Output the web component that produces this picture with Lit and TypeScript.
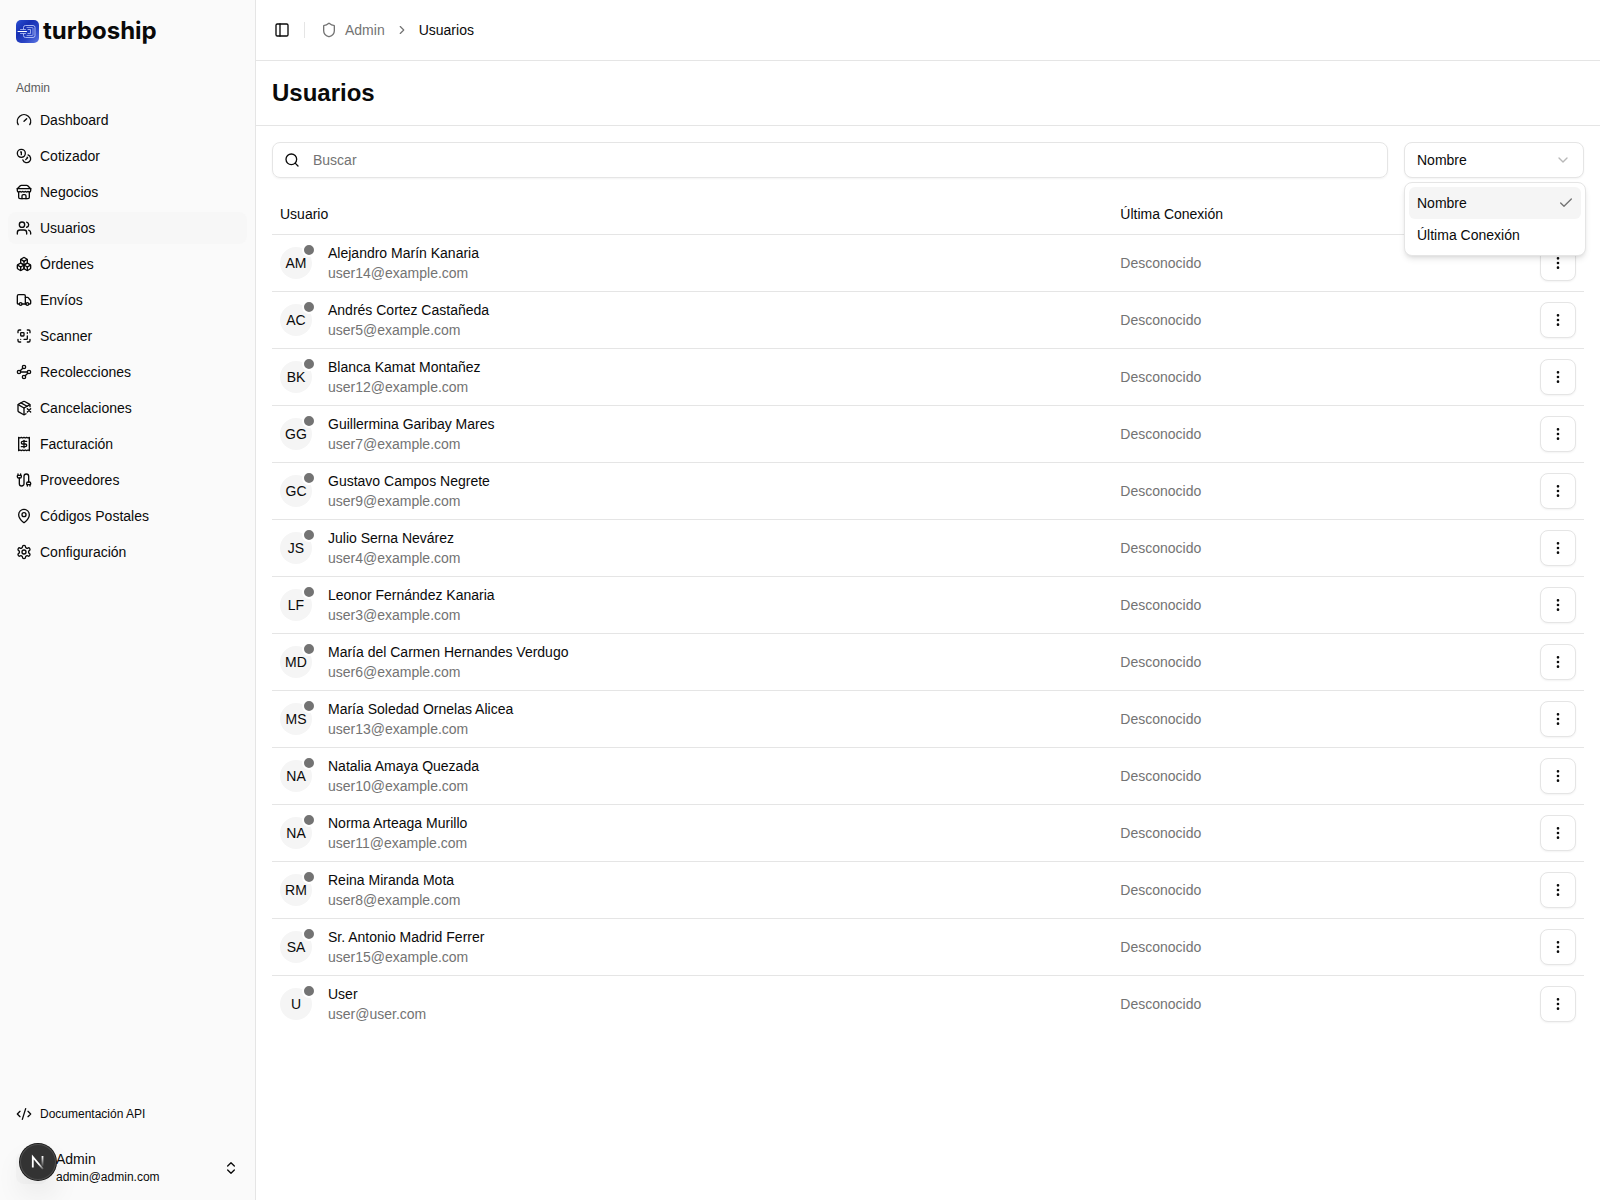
import { LitElement, html, css, svg, nothing, type SVGTemplateResult } from "lit";
import { customElement, property, state } from "lit/decorators.js";
import { classMap } from "lit/directives/class-map.js";

const icons: Record<string, SVGTemplateResult> = {
  gauge: svg`<path d="m12 14 4-4"/><path d="M3.34 19a10 10 0 1 1 17.32 0"/>`,
  coins: svg`<circle cx="8" cy="8" r="6"/><path d="M18.09 10.37A6 6 0 1 1 10.34 18"/><path d="M7 6h1v4"/><path d="m16.71 13.88.7.71-2.82 2.82"/>`,
  store: svg`<path d="m2 7 4.41-4.41A2 2 0 0 1 7.83 2h8.34a2 2 0 0 1 1.42.59L22 7"/><path d="M4 12v8a2 2 0 0 0 2 2h12a2 2 0 0 0 2-2v-8"/><path d="M15 22v-4a2 2 0 0 0-2-2h-2a2 2 0 0 0-2 2v4"/><path d="M2 7h20"/><path d="M22 7v3a2 2 0 0 1-2 2a2.7 2.7 0 0 1-1.59-.63.7.7 0 0 0-.82 0A2.7 2.7 0 0 1 16 12a2.7 2.7 0 0 1-1.59-.63.7.7 0 0 0-.82 0A2.7 2.7 0 0 1 12 12a2.7 2.7 0 0 1-1.59-.63.7.7 0 0 0-.82 0A2.7 2.7 0 0 1 8 12a2.7 2.7 0 0 1-1.59-.63.7.7 0 0 0-.82 0A2.7 2.7 0 0 1 4 12a2 2 0 0 1-2-2V7"/>`,
  users: svg`<path d="M16 21v-2a4 4 0 0 0-4-4H6a4 4 0 0 0-4 4v2"/><circle cx="9" cy="7" r="4"/><path d="M22 21v-2a4 4 0 0 0-3-3.87"/><path d="M16 3.13a4 4 0 0 1 0 7.75"/>`,
  boxes: svg`<path d="M2.97 12.92A2 2 0 0 0 2 14.63v3.24a2 2 0 0 0 .97 1.71l3 1.8a2 2 0 0 0 2.06 0L12 19v-5.5l-5-3-4.03 2.42Z"/><path d="m7 16.5-4.74-2.85"/><path d="m7 16.5 5-3"/><path d="M7 16.5v5.17"/><path d="M12 13.5V19l3.97 2.38a2 2 0 0 0 2.06 0l3-1.8a2 2 0 0 0 .97-1.71v-3.24a2 2 0 0 0-.97-1.71L17 10.5l-5 3Z"/><path d="m17 16.5-5-3"/><path d="m17 16.5 4.74-2.85"/><path d="M17 16.5v5.17"/><path d="M7.97 4.42A2 2 0 0 0 7 6.13v4.37l5 3 5-3V6.13a2 2 0 0 0-.97-1.71l-3-1.8a2 2 0 0 0-2.06 0l-3 1.8Z"/><path d="M12 8 7.26 5.15"/><path d="m12 8 4.74-2.85"/><path d="M12 13.5V8"/>`,
  truck: svg`<path d="M14 18V6a2 2 0 0 0-2-2H4a2 2 0 0 0-2 2v11a1 1 0 0 0 1 1h2"/><path d="M15 18H9"/><path d="M19 18h2a1 1 0 0 0 1-1v-3.65a1 1 0 0 0-.22-.624l-3.48-4.35A1 1 0 0 0 17.52 8H14"/><circle cx="17" cy="18" r="2"/><circle cx="7" cy="18" r="2"/>`,
  scan: svg`<path d="M17 12v4a1 1 0 0 1-1 1h-4"/><path d="M17 3h2a2 2 0 0 1 2 2v2"/><path d="M17 8V7"/><path d="M21 17v2a2 2 0 0 1-2 2h-2"/><path d="M3 7V5a2 2 0 0 1 2-2h2"/><path d="M7 17h.01"/><path d="M7 21H5a2 2 0 0 1-2-2v-2"/><rect x="7" y="7" width="5" height="5" rx="1"/>`,
  waypoints: svg`<circle cx="12" cy="4.5" r="2.5"/><path d="m10.2 6.3-3.9 3.9"/><circle cx="4.5" cy="12" r="2.5"/><path d="M7 12h10"/><circle cx="19.5" cy="12" r="2.5"/><path d="m13.8 17.7 3.9-3.9"/><circle cx="12" cy="19.5" r="2.5"/>`,
  packageX: svg`<path d="M21 10V8a2 2 0 0 0-1-1.73l-7-4a2 2 0 0 0-2 0l-7 4A2 2 0 0 0 3 8v8a2 2 0 0 0 1 1.73l7 4a2 2 0 0 0 2 0l2-1.14"/><path d="m7.5 4.27 9 5.15"/><path d="M3.29 7 12 12l8.71-5"/><path d="M12 22V12"/><path d="m17 13 5 5m-5 0 5-5"/>`,
  receipt: svg`<path d="M4 2v20l2-1 2 1 2-1 2 1 2-1 2 1 2-1 2 1V2l-2 1-2-1-2 1-2-1-2 1-2-1-2 1Z"/><path d="M16 8h-6a2 2 0 1 0 0 4h4a2 2 0 1 1 0 4H8"/><path d="M12 17.5v-11"/>`,
  cable: svg`<path d="M17 21v-2a1 1 0 0 1-1-1v-1a2 2 0 0 1 2-2h2a2 2 0 0 1 2 2v1a1 1 0 0 1-1 1"/><path d="M19 15V6.5a1 1 0 0 0-7 0v11a1 1 0 0 1-7 0V9"/><path d="M21 21v-2h-4"/><path d="M3 5h4V3"/><path d="M7 5a1 1 0 0 1 1 1v1a2 2 0 0 1-2 2H4a2 2 0 0 1-2-2V6a1 1 0 0 1 1-1V3"/>`,
  pin: svg`<path d="M20 10c0 4.993-5.539 10.193-7.399 11.799a1 1 0 0 1-1.202 0C9.539 20.193 4 14.993 4 10a8 8 0 0 1 16 0"/><circle cx="12" cy="10" r="3"/>`,
  settings: svg`<path d="M12.22 2h-.44a2 2 0 0 0-2 2v.18a2 2 0 0 1-1 1.73l-.43.25a2 2 0 0 1-2 0l-.15-.08a2 2 0 0 0-2.73.73l-.22.38a2 2 0 0 0 .73 2.73l.15.1a2 2 0 0 1 1 1.72v.51a2 2 0 0 1-1 1.74l-.15.09a2 2 0 0 0-.73 2.73l.22.38a2 2 0 0 0 2.73.73l.15-.08a2 2 0 0 1 2 0l.43.25a2 2 0 0 1 1 1.73V20a2 2 0 0 0 2 2h.44a2 2 0 0 0 2-2v-.18a2 2 0 0 1 1-1.73l.43-.25a2 2 0 0 1 2 0l.15.08a2 2 0 0 0 2.73-.73l.22-.39a2 2 0 0 0-.73-2.73l-.15-.08a2 2 0 0 1-1-1.74v-.5a2 2 0 0 1 1-1.74l.15-.09a2 2 0 0 0 .73-2.73l-.22-.38a2 2 0 0 0-2.73-.73l-.15.08a2 2 0 0 1-2 0l-.43-.25a2 2 0 0 1-1-1.73V4a2 2 0 0 0-2-2z"/><circle cx="12" cy="12" r="3"/>`,
  code: svg`<path d="m18 16 4-4-4-4"/><path d="m6 8-4 4 4 4"/><path d="m14.5 4-5 16"/>`,
  chevronsUpDown: svg`<path d="m7 15 5 5 5-5"/><path d="m7 9 5-5 5 5"/>`,
  panelLeft: svg`<rect width="18" height="18" x="3" y="3" rx="2"/><path d="M9 3v18"/>`,
  shield: svg`<path d="M20 13c0 5-3.5 7.5-7.66 8.95a1 1 0 0 1-.67-.01C7.5 20.5 4 18 4 13V6a1 1 0 0 1 1-1c2 0 4.5-1.2 6.24-2.72a1.17 1.17 0 0 1 1.52 0C14.51 3.81 17 5 19 5a1 1 0 0 1 1 1z"/>`,
  chevronRight: svg`<path d="m9 18 6-6-6-6"/>`,
  chevronDown: svg`<path d="m6 9 6 6 6-6"/>`,
  check: svg`<path d="M20 6 9 17l-5-5"/>`,
  search: svg`<circle cx="11" cy="11" r="8"/><path d="m21 21-4.3-4.3"/>`,
  dots: svg`<circle cx="12" cy="12" r="1"/><circle cx="12" cy="5" r="1"/><circle cx="12" cy="19" r="1"/>`,
};

const icon = (name: string, size = 16) => html`<svg
  width=${size} height=${size} viewBox="0 0 24 24" fill="none" stroke="currentColor"
  stroke-width="2" stroke-linecap="round" stroke-linejoin="round" aria-hidden="true"
>${icons[name]}</svg>`;

const reset = css`
  *, *::before, *::after { box-sizing: border-box; }
  button, input, select { font: inherit; color: inherit; }
  button { cursor: pointer; }
  svg { display: block; flex: none; }
  a { color: inherit; text-decoration: none; }
`;

const navItems = [
  ["Dashboard", "gauge"],
  ["Cotizador", "coins"],
  ["Negocios", "store"],
  ["Usuarios", "users"],
  ["Órdenes", "boxes"],
  ["Envíos", "truck"],
  ["Scanner", "scan"],
  ["Recolecciones", "waypoints"],
  ["Cancelaciones", "packageX"],
  ["Facturación", "receipt"],
  ["Proveedores", "cable"],
  ["Códigos Postales", "pin"],
  ["Configuración", "settings"],
];

interface User {
  name: string;
  email: string;
  initials: string;
}

const user = (initials: string, name: string, email: string): User => ({ initials, name, email });

const users: User[] = [
  user("AM", "Alejandro Marín Kanaria", "user14@example.com"),
  user("AC", "Andrés Cortez Castañeda", "user5@example.com"),
  user("BK", "Blanca Kamat Montañez", "user12@example.com"),
  user("GG", "Guillermina Garibay Mares", "user7@example.com"),
  user("GC", "Gustavo Campos Negrete", "user9@example.com"),
  user("JS", "Julio Serna Nevárez", "user4@example.com"),
  user("LF", "Leonor Fernández Kanaria", "user3@example.com"),
  user("MD", "María del Carmen Hernandes Verdugo", "user6@example.com"),
  user("MS", "María Soledad Ornelas Alicea", "user13@example.com"),
  user("NA", "Natalia Amaya Quezada", "user10@example.com"),
  user("NA", "Norma Arteaga Murillo", "user11@example.com"),
  user("RM", "Reina Miranda Mota", "user8@example.com"),
  user("SA", "Sr. Antonio Madrid Ferrer", "user15@example.com"),
  user("U", "User", "user@user.com"),
];

@customElement("app-sidebar")
export class AppSidebar extends LitElement {
  @property() current = "Usuarios";

  static styles = [
    reset,
    css`
      :host {
        display: flex;
        flex-direction: column;
        position: sticky;
        top: 0;
        height: 100vh;
        background: #fafafa;
        border-right: 1px solid #e5e5e5;
      }
      .brand {
        display: flex;
        align-items: center;
        gap: 4px;
        height: 64px;
        padding: 0 16px 2px;
        font-family: Inter, "Liberation Sans", sans-serif;
        font-size: 24px;
        line-height: 32px;
        font-weight: 700;
      }
      .nav { flex: 1; padding: 8px; overflow: auto; }
      .label {
        margin: 0;
        padding: 0 8px;
        font-size: 12px;
        line-height: 32px;
        font-weight: 400;
        color: #5c5c5c;
      }
      .list { display: grid; gap: 4px; margin: 0; padding: 0; list-style: none; }
      .item {
        display: flex;
        align-items: center;
        gap: 8px;
        height: 32px;
        padding: 0 8px;
        border-radius: 8px;
      }
      .item.active, .item:hover { background: #f7f7f7; }
      .item.small { height: 28px; font-size: 12px; }
      .support { padding: 8px; }
      .footer { padding: 8px; }
      .account {
        display: flex;
        align-items: center;
        gap: 8px;
        width: 100%;
        height: 48px;
        padding: 0 8px;
        border: 0;
        border-radius: 8px;
        background: none;
        text-align: left;
      }
      .avatar { width: 32px; height: 32px; border-radius: 8px; background: #f5f5f5; }
      .who { display: grid; flex: 1; line-height: 18px; }
      .mail { font-size: 12px; }
    `,
  ];

  render() {
    return html`
      <a class="brand" href="#inicio">
        <svg width="23" height="24" viewBox="0 -1 23 24" fill="none" aria-hidden="true">
          <defs>
            <linearGradient id="brand-fill" x1="0" y1="0" x2="1" y2="1">
              <stop offset="0" stop-color="#2b50d2" />
              <stop offset="0.35" stop-color="#1730b4" />
              <stop offset="0.65" stop-color="#2a44c4" />
              <stop offset="1" stop-color="#6079e4" />
            </linearGradient>
          </defs>
          <rect width="23" height="23" rx="5" fill="url(#brand-fill)" />
          <g stroke="#b9c5f8" stroke-linecap="round" stroke-linejoin="round">
            <path d="M2 11.5h8.500" stroke="#fff" />
            <path d="M4.500 9.500h5M4.500 13.500h5" stroke-width=".8" />
            <path d="M7.500 9V7.500q0-2 2-2H17q2 0 2 2v8q0 2-2 2H9.500q-2 0-2-2V14" stroke-width=".9" />
            <path d="M11 7.500h5q1 0 1 1v6q0 1-1 1h-5" stroke-width=".7" />
            <path d="M12 9.500h2.500v4H12" stroke-width=".8" />
          </g>
        </svg>
        <span>turboship</span>
      </a>
      <nav class="nav" aria-label="Admin">
        <h2 class="label">Admin</h2>
        <ul class="list">
          ${navItems.map(
            ([label, glyph]) => html`<li>
              <a
                class=${classMap({ item: true, active: label === this.current })}
                href="#${glyph}"
                aria-current=${label === this.current ? "page" : nothing}
                >${icon(glyph)}<span>${label}</span></a
              >
            </li>`
          )}
        </ul>
      </nav>
      <div class="support">
        <a class="item small" href="#api">${icon("code")}<span>Documentación API</span></a>
      </div>
      <div class="footer">
        <button class="account" type="button">
          <span class="avatar"></span>
          <span class="who">
            <span>Admin</span>
            <span class="mail">admin@admin.com</span>
          </span>
          ${icon("chevronsUpDown")}
        </button>
      </div>
    `;
  }
}

@customElement("sort-select")
export class SortSelect extends LitElement {
  @state() private value = "Nombre";
  @state() private open = true;

  private options = ["Nombre", "Última Conexión"];

  static styles = [
    reset,
    css`
      :host { display: block; position: relative; }
      .trigger { display: grid; grid-template-columns: 1fr 42px; align-items: center; }
      .field {
        grid-area: 1 / 1 / 2 / 3;
        appearance: none;
        width: 100%;
        height: 36px;
        padding: 0 12px;
        border: 1px solid #e5e5e5;
        border-radius: 8px;
        background: #fff;
        box-shadow: 0 1px 2px rgb(0 0 0 / 0.05);
      }
      .chevron { grid-area: 1 / 2; justify-self: center; color: #737373; opacity: 0.5; pointer-events: none; }
      .menu {
        position: absolute;
        z-index: 2;
        top: calc(100% + 4px);
        left: 0;
        right: -2px;
        padding: 4px;
        border: 1px solid #e5e5e5;
        border-radius: 8px;
        background: #fff;
        box-shadow: 0 4px 6px -1px rgb(0 0 0 / 0.1), 0 2px 4px -2px rgb(0 0 0 / 0.1);
      }
      .option {
        display: flex;
        align-items: center;
        justify-content: space-between;
        width: 100%;
        height: 32px;
        padding: 0 7px 0 8px;
        border: 0;
        border-radius: 6px;
        background: none;
        text-align: left;
      }
      .option.selected { background: #f5f5f5; }
      .option svg { color: #737373; }
    `,
  ];

  private pick(value: string) {
    this.value = value;
    this.open = false;
  }

  render() {
    return html`
      <div class="trigger">
        <select
          class="field"
          aria-label="Ordenar por"
          .value=${this.value}
          @change=${(e: Event) => this.pick((e.target as HTMLSelectElement).value)}
        >
          ${this.options.map((o) => html`<option value=${o}>${o}</option>`)}
        </select>
        <span class="chevron">${icon("chevronDown")}</span>
      </div>
      ${this.open
        ? html`<div class="menu" role="listbox" aria-label="Ordenar por">
            ${this.options.map(
              (o) => html`<button
                type="button"
                role="option"
                aria-selected=${o === this.value ? "true" : "false"}
                class=${classMap({ option: true, selected: o === this.value })}
                @click=${() => this.pick(o)}
              >
                <span>${o}</span>${o === this.value ? icon("check") : nothing}
              </button>`
            )}
          </div>`
        : nothing}
    `;
  }
}

@customElement("user-table")
export class UserTable extends LitElement {
  @property({ attribute: false }) users: User[] = [];

  static styles = [
    reset,
    css`
      :host { display: block; }
      .table { width: 100%; border-spacing: 0; table-layout: fixed; }
      .col-user { width: 64.05%; }
      .col-menu { width: 52px; }
      th {
        height: 41px;
        padding: 0 8px;
        border-bottom: 1px solid #e5e5e5;
        font-weight: 400;
        text-align: left;
      }
      td { padding: 8px; border-bottom: 1px solid #e5e5e5; }
      tbody tr:last-child td { border-bottom: 0; }
      .person { display: flex; align-items: center; gap: 16px; }
      .avatar {
        display: grid;
        place-items: center;
        position: relative;
        width: 32px;
        height: 32px;
        border-radius: 50%;
        background: #f5f5f5;
      }
      .status {
        position: absolute;
        top: -4px;
        right: -4px;
        width: 14px;
        height: 14px;
        border: 2px solid #fff;
        border-radius: 50%;
        background: #737373;
      }
      .who { display: grid; }
      .muted { color: #737373; }
      .more {
        display: grid;
        place-items: center;
        width: 36px;
        height: 36px;
        padding: 0;
        border: 1px solid #e5e5e5;
        border-radius: 8px;
        background: #fff;
        box-shadow: 0 1px 2px rgb(0 0 0 / 0.05);
      }
    `,
  ];

  render() {
    return html`<table class="table">
      <colgroup>
        <col class="col-user" />
        <col />
        <col class="col-menu" />
      </colgroup>
      <thead>
        <tr>
          <th scope="col">Usuario</th>
          <th scope="col">Última Conexión</th>
          <th></th>
        </tr>
      </thead>
      <tbody>
        ${this.users.map(
          (u) => html`<tr>
            <td>
              <div class="person">
                <span class="avatar">${u.initials}<span class="status"></span></span>
                <span class="who"><span>${u.name}</span><span class="muted">${u.email}</span></span>
              </div>
            </td>
            <td class="muted">Desconocido</td>
            <td>
              <button class="more" type="button" aria-label="Acciones">${icon("dots")}</button>
            </td>
          </tr>`
        )}
      </tbody>
    </table>`;
  }
}

@customElement("app-root")
export class AppRoot extends LitElement {
  @state() private query = "";

  static styles = [
    reset,
    css`
      :host {
        display: grid;
        grid-template-columns: 256px minmax(0, 1fr);
        min-height: 100vh;
        background: #fff;
        color: #0a0a0a;
        font-family: "Liberation Sans", Arial, sans-serif;
        font-size: 14px;
        line-height: 20px;
      }
      .topbar {
        display: flex;
        align-items: center;
        gap: 8px;
        height: 61px;
        padding: 0 12px;
        border-bottom: 1px solid #e5e5e5;
      }
      .toggle {
        display: grid;
        place-items: center;
        width: 28px;
        height: 28px;
        padding: 0;
        border: 0;
        border-radius: 6px;
        background: none;
      }
      .divider { width: 1px; height: 16px; margin-right: 8px; background: #e5e5e5; }
      .crumbs { display: flex; align-items: center; gap: 10px; margin: 0; padding: 0; list-style: none; }
      .crumb { display: flex; align-items: center; gap: 8px; }
      .muted { color: #737373; }
      .title {
        margin: 0;
        padding: 16px;
        border-bottom: 1px solid #e5e5e5;
        font-size: 24px;
        line-height: 32px;
        font-weight: 700;
      }
      .content { display: grid; gap: 16px; padding: 16px; }
      .filters { display: grid; grid-template-columns: minmax(0, 1fr) 180px; gap: 16px; }
      .search {
        display: flex;
        align-items: center;
        height: 36px;
        padding-left: 11px;
        border: 1px solid #e5e5e5;
        border-radius: 8px;
        box-shadow: 0 1px 2px rgb(0 0 0 / 0.05);
      }
      .search-input {
        flex: 1;
        min-width: 0;
        height: 34px;
        padding: 0 13px;
        border: 0;
        outline: 0;
        background: none;
      }
      .search-input::placeholder { color: #737373; opacity: 1; }
      .devtools {
        position: fixed;
        z-index: 3;
        left: 20px;
        bottom: 20px;
        display: grid;
        place-items: center;
        width: 36px;
        height: 36px;
        padding: 0;
        border: 0;
        border-radius: 50%;
        background: #333;
        box-shadow: 0 0 0 1px #171717, inset 0 0 0 1px #4d4d4d, 0 16px 32px -8px rgb(0 0 0 / 0.24);
      }
    `,
  ];

  render() {
    const needle = this.query.toLowerCase();
    const shown = users.filter((u) => (u.name + u.email).toLowerCase().includes(needle));
    return html`
      <app-sidebar></app-sidebar>
      <main>
        <header class="topbar">
          <button class="toggle" type="button" aria-label="Alternar barra lateral">
            ${icon("panelLeft")}
          </button>
          <span class="divider"></span>
          <nav aria-label="Ruta">
            <ol class="crumbs">
              <li><a class="crumb muted" href="#admin">${icon("shield")}Admin</a></li>
              <li class="muted" aria-hidden="true">${icon("chevronRight", 14)}</li>
              <li aria-current="page">Usuarios</li>
            </ol>
          </nav>
        </header>
        <h1 class="title">Usuarios</h1>
        <section class="content">
          <div class="filters">
            <label class="search">
              ${icon("search")}
              <input
                class="search-input"
                type="text"
                placeholder="Buscar"
                aria-label="Buscar"
                .value=${this.query}
                @input=${(e: Event) => (this.query = (e.target as HTMLInputElement).value)}
              />
            </label>
            <sort-select></sort-select>
          </div>
          <user-table .users=${shown}></user-table>
        </section>
      </main>
      <button class="devtools" type="button" aria-label="Herramientas de desarrollo">
        <svg width="16" height="16" viewBox="0 0 16 16" fill="none" aria-hidden="true">
          <defs>
            <linearGradient id="fade-down" x1="0" y1="2" x2="0" y2="13" gradientUnits="userSpaceOnUse">
              <stop stop-color="#fff" />
              <stop offset="1" stop-color="#fff" stop-opacity="0" />
            </linearGradient>
            <linearGradient id="fade-tail" x1="9" y1="10" x2="13" y2="15" gradientUnits="userSpaceOnUse">
              <stop stop-color="#fff" />
              <stop offset="1" stop-color="#fff" stop-opacity="0.2" />
            </linearGradient>
          </defs>
          <path d="M2.800 13.500V3L13 15" stroke="url(#fade-tail)" stroke-width="1.800" />
          <path d="M12.500 2v10" stroke="url(#fade-down)" stroke-width="1.800" />
        </svg>
      </button>
    `;
  }
}
